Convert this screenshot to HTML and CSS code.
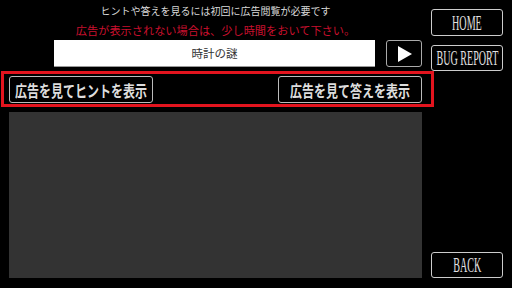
FILE: index.html
```html
<!DOCTYPE html>
<html lang="ja">
<head>
<meta charset="utf-8">
<link rel="stylesheet" href="styles.css">
</head>
<body>
<div class="app">
  <div class="main">
    <p class="notice">ヒントや答えを見るには初回に広告閲覧が必要です</p>
    <p class="warning">広告が表示されない場合は、少し時間をおいて下さい。</p>
    <div class="search">
      <div class="title-box">時計の謎</div>
      <button class="play"><svg width="14" height="16" viewBox="0 0 14 16"><polygon points="0,0 14,8 0,16" fill="#fff"/></svg></button>
    </div>
    <div class="ad-bar">
      <button class="ad-btn"><span class="cond">広告を見てヒントを表示</span></button>
      <button class="ad-btn"><span class="cond">広告を見て答えを表示</span></button>
    </div>
    <div class="canvas"></div>
  </div>
  <div class="side">
    <button class="side-btn home"><span class="narrow">HOME</span></button>
    <button class="side-btn bug"><span class="narrow">BUG REPORT</span></button>
    <button class="side-btn back"><span class="narrow">BACK</span></button>
  </div>
</div>
</body>
</html>
```
FILE: styles.css
```css
html, body {
  margin: 0;
  padding: 0;
  background: #000;
  width: 512px;
  height: 288px;
  overflow: hidden;
}
body {
  font-family: "Noto Sans CJK JP", "Noto Sans", sans-serif;
}
button {
  font: inherit;
  padding: 0;
  margin: 0;
  cursor: pointer;
}
.app {
  display: flex;
  height: 288px;
}
.main {
  width: 431px;
  display: flex;
  flex-direction: column;
  padding-top: 4px;
  box-sizing: border-box;
}
.notice {
  margin: 0;
  height: 14px;
  line-height: 14px;
  font-size: 10px;
  color: #d8d8d8;
  text-align: center;
}
.warning {
  margin: 4px 0 0;
  height: 16px;
  line-height: 16px;
  font-size: 11.2px;
  color: #c8102e;
  text-align: center;
}
.search {
  display: flex;
  margin-top: 2px;
  height: 27px;
}
.title-box {
  margin-left: 54px;
  width: 321px;
  height: 27px;
  box-sizing: border-box;
  background: #fff;
  border-bottom: 1px solid #999;
  color: #333;
  font-size: 11.5px;
  line-height: 27px;
  text-align: center;
}
.play {
  margin-left: 11px;
  width: 36px;
  height: 27px;
  background: #000;
  border: 1px solid #aaa;
  border-radius: 3px;
  display: flex;
  align-items: center;
  justify-content: center;
}
.play svg { display: block; margin-left: 1px; }
.ad-bar {
  margin-top: 4px;
  margin-left: 1px;
  width: 433px;
  height: 36px;
  box-sizing: border-box;
  border: 3px solid #e3141e;
  padding: 2px 9px 1px 5px;
  display: flex;
  justify-content: space-between;
}
.ad-btn {
  width: 144px;
  height: 27px;
  background: #000;
  border: 1px solid #bbb;
  border-radius: 3px;
  color: #ddd;
  font-size: 16px;
  font-weight: bold;
  text-align: center;
  line-height: 24px;
  overflow: hidden;
  white-space: nowrap;
}
.cond {
  display: inline-block;
  white-space: nowrap;
  margin: 0 -40px;
  transform: scaleX(0.75);
}
.canvas {
  margin-top: 5px;
  margin-left: 9px;
  width: 413px;
  height: 166px;
  background: #333;
}
.side {
  width: 72px;
  display: flex;
  flex-direction: column;
  padding-top: 9px;
}
.side-btn {
  width: 72px;
  height: 27px;
  box-sizing: border-box;
  background: #000;
  border: 1px solid #ccc;
  border-radius: 3px;
  color: #e0e0e0;
  font-family: "Liberation Serif", "Times New Roman", serif;
  font-size: 21px;
  text-align: center;
  line-height: 24px;
  overflow: hidden;
  white-space: nowrap;
}
.narrow {
  display: inline-block;
  white-space: nowrap;
  margin: 0 -40px;
  transform: scaleX(0.48);
}
.bug { margin-top: 9px; height: 26px; }
.back { margin-top: auto; margin-bottom: 10px; height: 26px; }
```
